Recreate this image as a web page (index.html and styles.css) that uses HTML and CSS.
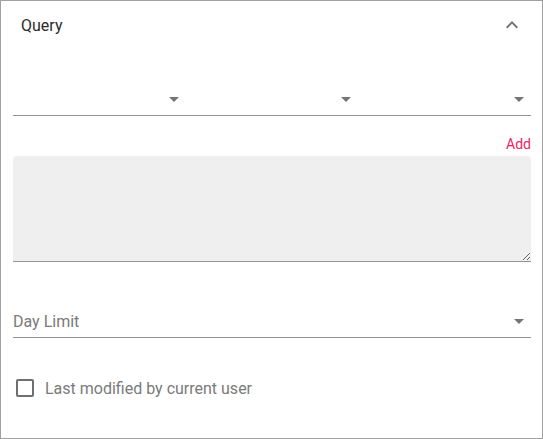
FILE: index.html
```html
<!DOCTYPE html>
<html>
<head>
<meta charset="utf-8">
<link rel="stylesheet" href="styles.css">
</head>
<body>
<div class="panel">
  <div class="header">
    <span class="title">Query</span>
    <svg class="chevron" width="24" height="24" viewBox="0 0 24 24"><path d="M12 8l-6 6 1.41 1.41L12 10.83l4.59 4.58L18 14z" fill="#757575"/></svg>
  </div>
  <div class="content">
    <div class="select-row">
      <div class="select"><span class="arrow"></span></div>
      <div class="select"><span class="arrow"></span></div>
      <div class="select"><span class="arrow"></span></div>
    </div>
    <div class="add-row"><span class="add">Add</span></div>
    <textarea class="area"></textarea>
    <div class="field">
      <span class="placeholder">Day Limit</span>
      <span class="arrow"></span>
    </div>
    <label class="check-row">
      <span class="box"></span>
      <span class="check-label">Last modified by current user</span>
    </label>
  </div>
</div>
</body>
</html>
```

FILE: styles.css
```css
html, body {
  margin: 0;
  padding: 0;
  background: #fff;
}
body {
  font-family: Roboto, "Liberation Sans", sans-serif;
}
.panel {
  width: 543px;
  height: 439px;
  box-sizing: border-box;
  border: 1px solid #a0a0a0;
}
.header {
  height: 48px;
  display: flex;
  align-items: center;
  justify-content: space-between;
  padding: 0 18px 0 20px;
}
.title {
  font-size: 16px;
  color: #2b2b2b;
}
.chevron {
  display: block;
}
.content {
  padding: 0 11px 0 12px;
  display: flex;
  flex-direction: column;
}
.select-row {
  margin-top: 34px;
  display: flex;
  height: 32px;
  border-bottom: 1px solid #949494;
}
.select {
  flex: 1;
  display: flex;
  align-items: center;
  justify-content: flex-end;
  padding-right: 7px;
}
.arrow {
  width: 0;
  height: 0;
  border-left: 5px solid transparent;
  border-right: 5px solid transparent;
  border-top: 5px solid #757575;
}
.add-row {
  margin-top: 20px;
  display: flex;
  justify-content: flex-end;
  line-height: 16px;
}
.add {
  font-size: 14px;
  color: #e91e63;
}
.area {
  margin: 4px 0 0;
  display: block;
  height: 106px;
  box-sizing: border-box;
  background: #efefef;
  border: none;
  border-bottom: 1px solid #949494;
  border-radius: 4px 4px 0 0;
  resize: vertical;
  padding: 0;
  outline: none;
}
.field {
  margin-top: 43px;
  height: 33px;
  box-sizing: border-box;
  border-bottom: 1px solid #949494;
  display: flex;
  align-items: center;
  justify-content: space-between;
  padding-right: 7px;
}
.placeholder {
  font-size: 16px;
  color: #7a7a7a;
}
.check-row {
  margin-top: 38px;
  height: 24px;
  display: flex;
  align-items: center;
  padding-left: 3px;
}
.box {
  width: 18px;
  height: 18px;
  box-sizing: border-box;
  border: 2px solid #6f6f6f;
  border-radius: 2px;
}
.check-label {
  margin-left: 11px;
  font-size: 16px;
  color: #7a7a7a;
}
```
